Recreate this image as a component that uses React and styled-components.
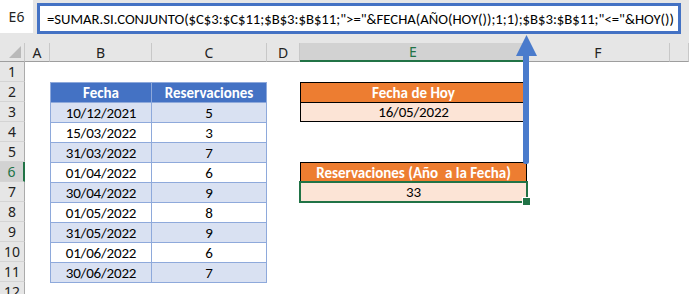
import React from 'react';
import styled, { createGlobalStyle, css } from 'styled-components';

const GlobalStyle = createGlobalStyle`
  html, body {
    margin: 0;
    padding: 0;
    background: #ffffff;
    overflow: hidden;
  }
  * {
    box-sizing: border-box;
  }
`;

const CELL_FONT = `Carlito, Lato, 'Liberation Sans', sans-serif`;
const UI_FONT = `'Noto Sans', 'Open Sans', sans-serif`;
const GREEN = '#217346';

const Page = styled.div`
  position: relative;
  width: 689px;
  height: 294px;
  background: #fff;
`;

const FormulaBar = styled.div`
  display: flex;
  align-items: flex-start;
  gap: 4px;
  height: 43px;
  background: #e6e6e6;
`;

const NameBox = styled.div`
  width: 33px;
  height: 33px;
  background: #fff;
  display: flex;
  align-items: center;
  justify-content: center;
  font-family: ${UI_FONT};
  font-size: 14px;
  color: #222;
`;

const FormulaInput = styled.div`
  margin-top: 3px;
  width: 644px;
  height: 31px;
  border: 3px solid #4472c4;
  background: #fff;
  display: flex;
  align-items: center;
  padding-left: 7px;
  font-family: ${CELL_FONT};
  font-size: 14.7px;
  color: #000;
  white-space: nowrap;
  overflow: hidden;
`;

const Sheet = styled.div`
  display: grid;
  grid-template-columns: 25px 25px 102px 115px 33px 227px 143px 1fr;
  grid-template-rows: 19px repeat(12, 20px);
`;

const Corner = styled.div`
  grid-column: 1;
  grid-row: 1;
  background: #e6e6e6;
  border-bottom: 1px solid #9e9e9e;
  border-right: 1px solid #c8c8c8;
  position: relative;

  &::after {
    content: '';
    position: absolute;
    right: 3px;
    bottom: 3px;
    border-style: solid;
    border-width: 0 0 12px 12px;
    border-color: transparent transparent #b9b9b9 transparent;
  }
`;

const ColHeader = styled.div`
  grid-row: 1;
  background: ${({ $active }) => ($active ? '#d2d2d2' : '#e6e6e6')};
  border-bottom: ${({ $active }) => ($active ? `2px solid ${GREEN}` : '1px solid #9e9e9e')};
  border-right: 1px solid #c8c8c8;
  display: flex;
  align-items: center;
  justify-content: center;
  font-family: ${UI_FONT};
  font-size: 14px;
  color: ${({ $active }) => ($active ? GREEN : '#222')};
`;

const RowHeader = styled.div`
  grid-column: 1;
  background: ${({ $active }) => ($active ? '#d2d2d2' : '#e6e6e6')};
  border-right: ${({ $active }) => ($active ? `2px solid ${GREEN}` : '1px solid #ababab')};
  border-bottom: 1px solid #d4d4d4;
  display: flex;
  align-items: center;
  justify-content: center;
  font-family: ${UI_FONT};
  font-size: 14px;
  color: ${({ $active }) => ($active ? GREEN : '#222')};
`;

const DataTable = styled.div`
  grid-column: 3 / 5;
  grid-row: 3 / 13;
  align-self: start;
  display: grid;
  grid-template-columns: 100px 114px;
  grid-auto-rows: 19px;
  gap: 1px;
  padding: 1px;
  background: #8ea9db;
`;

const TableCell = styled.div`
  display: flex;
  align-items: center;
  justify-content: center;
  font-family: ${CELL_FONT};
  font-size: 15px;
  letter-spacing: -0.2px;
  color: #000;
  background: ${({ $band }) => ($band ? '#d9e1f2' : '#fff')};

  ${({ $head }) =>
    $head &&
    css`
      background: #4472c4;
      color: #fff;
      font-weight: 700;
      letter-spacing: 0;
    `}
`;

const InfoBlock = styled.div`
  grid-column: 6;
  grid-row: ${({ $rows }) => $rows};
  display: grid;
  grid-auto-rows: 1fr;
  border: 1px solid #000;
  border-bottom: ${({ $open }) => ($open ? 'none' : '1px solid #000')};
`;

const InfoCell = styled.div`
  display: flex;
  align-items: center;
  justify-content: center;
  font-family: ${CELL_FONT};
  font-size: 15px;
  letter-spacing: ${({ $head }) => ($head ? '0' : '-0.2px')};
  background: ${({ $head }) => ($head ? '#ed7d31' : '#fce4d6')};
  font-weight: ${({ $head }) => ($head ? 700 : 400)};
  color: ${({ $head }) => ($head ? '#fff' : '#000')};

  & + & {
    border-top: 1px solid #000;
  }
`;

const SelectedCell = styled.div`
  grid-column: 6;
  grid-row: 8;
  position: relative;
  display: flex;
  align-items: center;
  justify-content: center;
  background: #fce4d6;
  font-family: ${CELL_FONT};
  font-size: 15px;
  color: #000;

  &::after {
    content: '';
    position: absolute;
    inset: -1px;
    border: 2px solid ${GREEN};
  }

  &::before {
    content: '';
    position: absolute;
    right: -4px;
    bottom: -4px;
    width: 7px;
    height: 7px;
    background: ${GREEN};
    border: 1px solid #fff;
    z-index: 1;
  }
`;

const Arrow = styled.svg`
  position: absolute;
  left: 0;
  top: 0;
  pointer-events: none;
`;

const columns = ['A', 'B', 'C', 'D', 'E', 'F', ''];

const rows = [
  ['10/12/2021', '5'],
  ['15/03/2022', '3'],
  ['31/03/2022', '7'],
  ['01/04/2022', '6'],
  ['30/04/2022', '9'],
  ['01/05/2022', '8'],
  ['31/05/2022', '9'],
  ['01/06/2022', '6'],
  ['30/06/2022', '7'],
];

const formula =
  '=SUMAR.SI.CONJUNTO($C$3:$C$11;$B$3:$B$11;">="&FECHA(AÑO(HOY());1;1);$B$3:$B$11;"<="&HOY())';

export default function App() {
  return (
    <Page>
      <GlobalStyle />
      <FormulaBar>
        <NameBox>E6</NameBox>
        <FormulaInput>{formula}</FormulaInput>
      </FormulaBar>

      <Sheet>
        <Corner />
        {columns.map((c, i) => (
          <ColHeader key={i} $active={c === 'E'} style={{ gridColumn: i + 2 }}>
            {c}
          </ColHeader>
        ))}
        {Array.from({ length: 12 }, (_, i) => (
          <RowHeader key={i} $active={i + 1 === 6} style={{ gridRow: i + 2 }}>
            {i + 1}
          </RowHeader>
        ))}

        <DataTable>
          <TableCell $head>Fecha</TableCell>
          <TableCell $head>Reservaciones</TableCell>
          {rows.map(([fecha, n], i) => (
            <React.Fragment key={fecha + i}>
              <TableCell $band={i % 2 === 0}>{fecha}</TableCell>
              <TableCell $band={i % 2 === 0}>{n}</TableCell>
            </React.Fragment>
          ))}
        </DataTable>

        <InfoBlock $rows="3 / 5">
          <InfoCell $head>Fecha de Hoy</InfoCell>
          <InfoCell>16/05/2022</InfoCell>
        </InfoBlock>

        <InfoBlock $rows="7" $open>
          <InfoCell $head>Reservaciones (Año&nbsp; a la Fecha)</InfoCell>
        </InfoBlock>

        <SelectedCell>33</SelectedCell>
      </Sheet>

      <Arrow width="689" height="294" viewBox="0 0 689 294">
        <path d="M526.5 35 L537 56 L516 56 Z" fill="#4a7bcc" />
        <rect x="523" y="54" width="6" height="110" rx="2.5" fill="#4a7bcc" />
      </Arrow>
    </Page>
  );
}
